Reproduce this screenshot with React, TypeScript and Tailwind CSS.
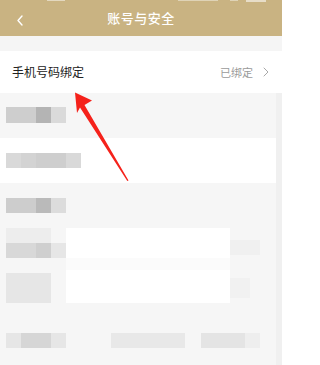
import React from 'react';

function Mosaic({ cells }: { cells: [string, string][] }) {
  return (
    <div className="flex">
      {cells.map(([w, c], i) => (
        <div key={i} className={`${w} h-full ${c}`} />
      ))}
    </div>
  );
}

export default function App() {
  return (
    <div className="relative w-[282px] h-[365px] overflow-hidden bg-[#f6f6f6] font-['Noto_Sans_CJK_SC','Noto_Sans',sans-serif]">
      {/* header */}
      <div className="relative h-[36px] bg-[#c9b382] flex items-center justify-center">
        <div className="absolute top-0 left-0 right-0 h-[2px] flex items-start opacity-70">
          <div className="ml-[47px] w-[18px] h-[1px] bg-white/70" />
          <div className="ml-[113px] w-[40px] h-[1px] bg-white/60" />
          <div className="ml-[12px] w-[8px] h-[1px] bg-white/60" />
          <div className="ml-[8px] w-[20px] h-[2px] bg-white/80" />
        </div>
        <svg className="absolute left-[16px] top-[15px]" width="8" height="11" viewBox="0 0 8 11">
          <path d="M6 1 L2 5.5 L6 10" fill="none" stroke="#fff" strokeWidth="1.4" strokeLinecap="round" strokeLinejoin="round" />
        </svg>
        <span className="text-[13px] font-medium text-white tracking-[0.5px]">账号与安全</span>
      </div>

      <div className="h-[15px] bg-[#f5f5f5]" />

      {/* phone binding row */}
      <div className="h-[42px] bg-white flex items-center justify-between pl-[12px] pr-[13px]">
        <span className="text-[12px] text-[#222]">手机号码绑定</span>
        <div className="flex items-center gap-[10px]">
          <span className="text-[11px] text-[#9a9a9a]">已绑定</span>
          <svg width="6" height="10" viewBox="0 0 6 10">
            <path d="M1 1 L5 5 L1 9" fill="none" stroke="#a8a8a8" strokeWidth="1" strokeLinecap="round" strokeLinejoin="round" />
          </svg>
        </div>
      </div>

      {/* pixelated rows */}
      <div className="pt-[14px] pb-[15px] pl-[6px]">
        <div className="h-[16px] flex">
          <Mosaic cells={[['w-[30px]', 'bg-[#cecece]'], ['w-[15px]', 'bg-[#b4b4b4]'], ['w-[15px]', 'bg-[#dadada]']]} />
        </div>
      </div>

      <div className="h-[45px] bg-white mr-[6px] pt-[15px] pl-[6px]">
        <div className="h-[15px] flex">
          <Mosaic cells={[['w-[15px]', 'bg-[#d9d9d9]'], ['w-[15px]', 'bg-[#d3d3d3]'], ['w-[30px]', 'bg-[#cecece]'], ['w-[15px]', 'bg-[#d9d9d9]']]} />
        </div>
      </div>

      <div className="pt-[15px] pb-[15px] pl-[6px]">
        <div className="h-[15px] flex">
          <Mosaic cells={[['w-[30px]', 'bg-[#cdcdcd]'], ['w-[15px]', 'bg-[#bababa]'], ['w-[15px]', 'bg-[#dcdcdc]']]} />
        </div>
      </div>

      <div className="flex h-[30px]">
        <div className="w-[66px] pl-[6px] flex flex-col">
          <div className="h-[15px] w-[45px] bg-[#ededed]" />
          <div className="h-[15px] flex">
            <Mosaic cells={[['w-[30px]', 'bg-[#d8d8d8]'], ['w-[15px]', 'bg-[#cfcfcf]'], ['w-[15px]', 'bg-[#e6e6e6]']]} />
          </div>
        </div>
        <div className="w-[164px] bg-white" />
        <div className="w-[30px] mt-[12px] h-[15px] bg-[#f0f0f0]" />
      </div>

      <div className="h-[12px] flex">
        <div className="ml-[66px] w-[164px] bg-[#fbfbfb]" />
      </div>

      <div className="flex h-[33px]">
        <div className="w-[66px] pl-[6px] pt-[3px]">
          <div className="w-[45px] h-[30px] bg-[#e6e6e6]" />
        </div>
        <div className="w-[164px] bg-white" />
        <div className="w-[20px] mt-[8px] h-[20px] bg-[#f1f1f1]" />
      </div>

      <div className="h-[30px]" />

      <div className="flex h-[15px] pl-[6px]">
        <Mosaic cells={[['w-[15px]', 'bg-[#e6e6e6]'], ['w-[30px]', 'bg-[#d6d6d6]'], ['w-[15px]', 'bg-[#e6e6e6]']]} />
        <div className="ml-[45px] w-[74px] bg-[#e8e8e8]" />
        <div className="ml-[16px] w-[44px] bg-[#e4e4e4]" />
        <div className="w-[15px] bg-[#eeeeee]" />
      </div>

      <div className="absolute top-0 right-0 w-[6px] h-full bg-[#f0f0f0] mt-[93px]" />

      {/* red annotation arrow */}
      <svg className="absolute left-0 top-0 pointer-events-none" width="282" height="365" viewBox="0 0 282 365">
        <polygon points="75,92.5 92,100.5 84.5,105 128.5,180.5 127.3,181 80,107.5 77,113" fill="#f5221b" />
      </svg>
    </div>
  );
}
